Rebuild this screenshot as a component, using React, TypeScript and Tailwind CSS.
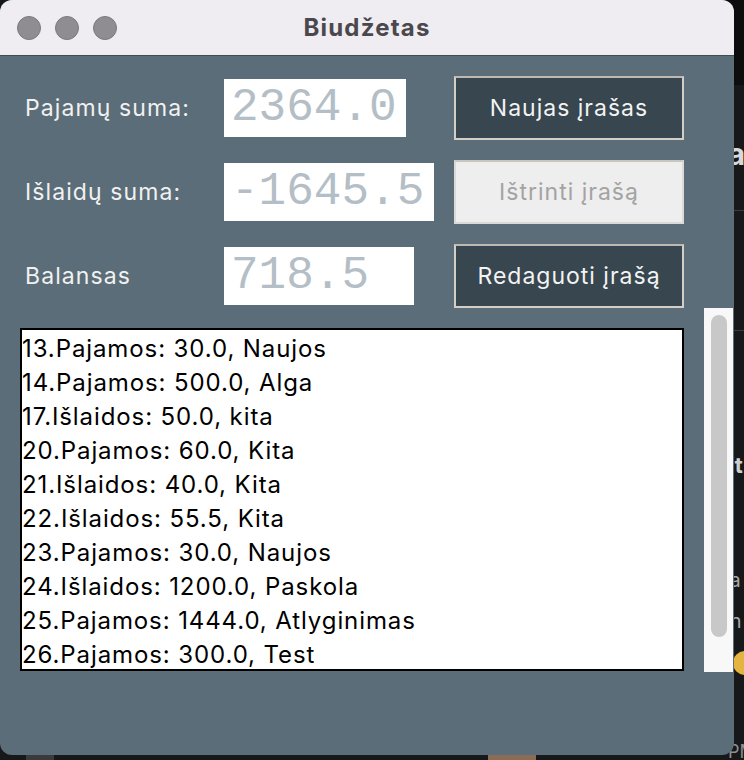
const entries = [
  "13.Pajamos: 30.0, Naujos",
  "14.Pajamos: 500.0, Alga",
  "17.Išlaidos: 50.0, kita",
  "20.Pajamos: 60.0, Kita",
  "21.Išlaidos: 40.0, Kita",
  "22.Išlaidos: 55.5, Kita",
  "23.Pajamos: 30.0, Naujos",
  "24.Išlaidos: 1200.0, Paskola",
  "25.Pajamos: 1444.0, Atlyginimas",
  "26.Pajamos: 300.0, Test",
];

const rows = [
  { label: "Pajamų suma:", value: "2364.0", width: "w-[182px]", button: "Naujas įrašas", disabled: false },
  { label: "Išlaidų suma:", value: "-1645.5", width: "w-[210px]", button: "Ištrinti įrašą", disabled: true },
  { label: "Balansas", value: "718.5", width: "w-[190px]", button: "Redaguoti įrašą", disabled: false },
];

const sans = "font-['Inter','Noto_Sans',sans-serif]";

function Row({ label, value, width, button, disabled }: (typeof rows)[number]) {
  return (
    <div className="flex h-[64px] items-center">
      <div className={`w-[224px] pl-[25px] text-[23px] tracking-[1.1px] text-[#f1f1f1] ${sans}`}>{label}</div>
      <div className={`${width} flex h-[58px] items-center bg-white pl-[7px] font-['Liberation_Mono',monospace] text-[46px] leading-none text-[#b4bec6]`}>
        {value}
      </div>
      <div className="flex-1" />
      <button
        className={`mr-[50px] flex h-[64px] w-[230px] items-center justify-center border-2 text-[23px] tracking-[1px] ${sans} ${
          disabled
            ? "border-[#dcdad6] border-t-[#c9c6c0] bg-[#eeeeee] text-[#a3a3a3]"
            : "border-[#d3cfc7] border-t-[#bdb9b1] bg-[#37464f] text-[#f3f3f3]"
        }`}
      >
        {button}
      </button>
    </div>
  );
}

export default function App() {
  return (
    <div className="relative h-[760px] w-[744px] overflow-hidden bg-[#17181a]">
      {/* desktop behind the window */}
      <div className="absolute left-[720px] top-0 h-[85px] w-[24px] bg-[#0d0d0e]" />
      <div className="absolute left-[720px] top-[210px] h-px w-[24px] bg-[#3a3b3e]" />
      <div className="absolute left-[720px] top-[330px] h-px w-[24px] bg-[#3a3b3e]" />
      <div className="absolute left-[716px] top-[132px] font-['Inter',sans-serif] text-[30px] font-bold text-[#d8d8d8]">ra</div>
      <div className="absolute left-[716px] top-[449px] font-['Inter',sans-serif] text-[22px] font-bold text-[#cfcfcf]">Fit</div>
      <div className="absolute left-[718px] top-[565px] font-['Inter',sans-serif] text-[20px] text-[#a9a9a9]">ca</div>
      <div className="absolute left-[722px] top-[606px] font-['Inter',sans-serif] text-[20px] text-[#a9a9a9]">rn</div>
      <div className="absolute left-[733px] top-[651px] h-[24px] w-[24px] rounded-full bg-[#e5b340]" />
      <div className="absolute left-[728px] top-[738px] font-['Inter',sans-serif] text-[18px] text-[#8f8f8f]">PM</div>
      <div className="absolute left-[488px] top-[754px] h-[6px] w-[48px] bg-[#8a6d55]" />
      <div className="absolute left-[26px] top-[754px] h-[6px] w-[28px] bg-[#3a3a3c]" />

      {/* window */}
      <div className="absolute left-0 top-0 flex h-[755px] w-[734px] flex-col overflow-hidden rounded-[12px] bg-[#5b6d78]">
        <div className="relative flex h-[56px] shrink-0 items-center justify-center border-b border-[#3f4d55] bg-[#efecf2]">
          <div className="absolute left-[17px] top-[16px] flex gap-[14px]">
            <span className="h-[24px] w-[24px] rounded-full border border-[#7b797e] bg-[#8f8d92]" />
            <span className="h-[24px] w-[24px] rounded-full border border-[#7b797e] bg-[#8f8d92]" />
            <span className="h-[24px] w-[24px] rounded-full border border-[#7b797e] bg-[#8f8d92]" />
          </div>
          <span className={`text-[24px] font-bold tracking-[1.2px] text-[#4a484d] ${sans}`}>Biudžetas</span>
        </div>

        <div className="flex flex-col pt-[20px]">
          <div className="flex flex-col gap-[20px]">
            {rows.map((r) => (
              <Row key={r.label} {...r} />
            ))}
          </div>

          <div className="flex items-start">
            <div className="ml-[20px] mt-[20px] h-[343px] w-[664px] border-2 border-black bg-white">
              <ul className={`pt-[2px] text-[24px] leading-[34px] tracking-[0.9px] text-black ${sans}`}>
                {entries.map((e) => (
                  <li key={e}>{e}</li>
                ))}
              </ul>
            </div>
            <div className="ml-[20px] flex h-[364px] w-[29px] justify-center bg-[#f8f8f8] pt-[7px]">
              <div className="h-[322px] w-[16px] rounded-full bg-[#c8c8c8]" />
            </div>
          </div>
        </div>
      </div>
    </div>
  );
}
